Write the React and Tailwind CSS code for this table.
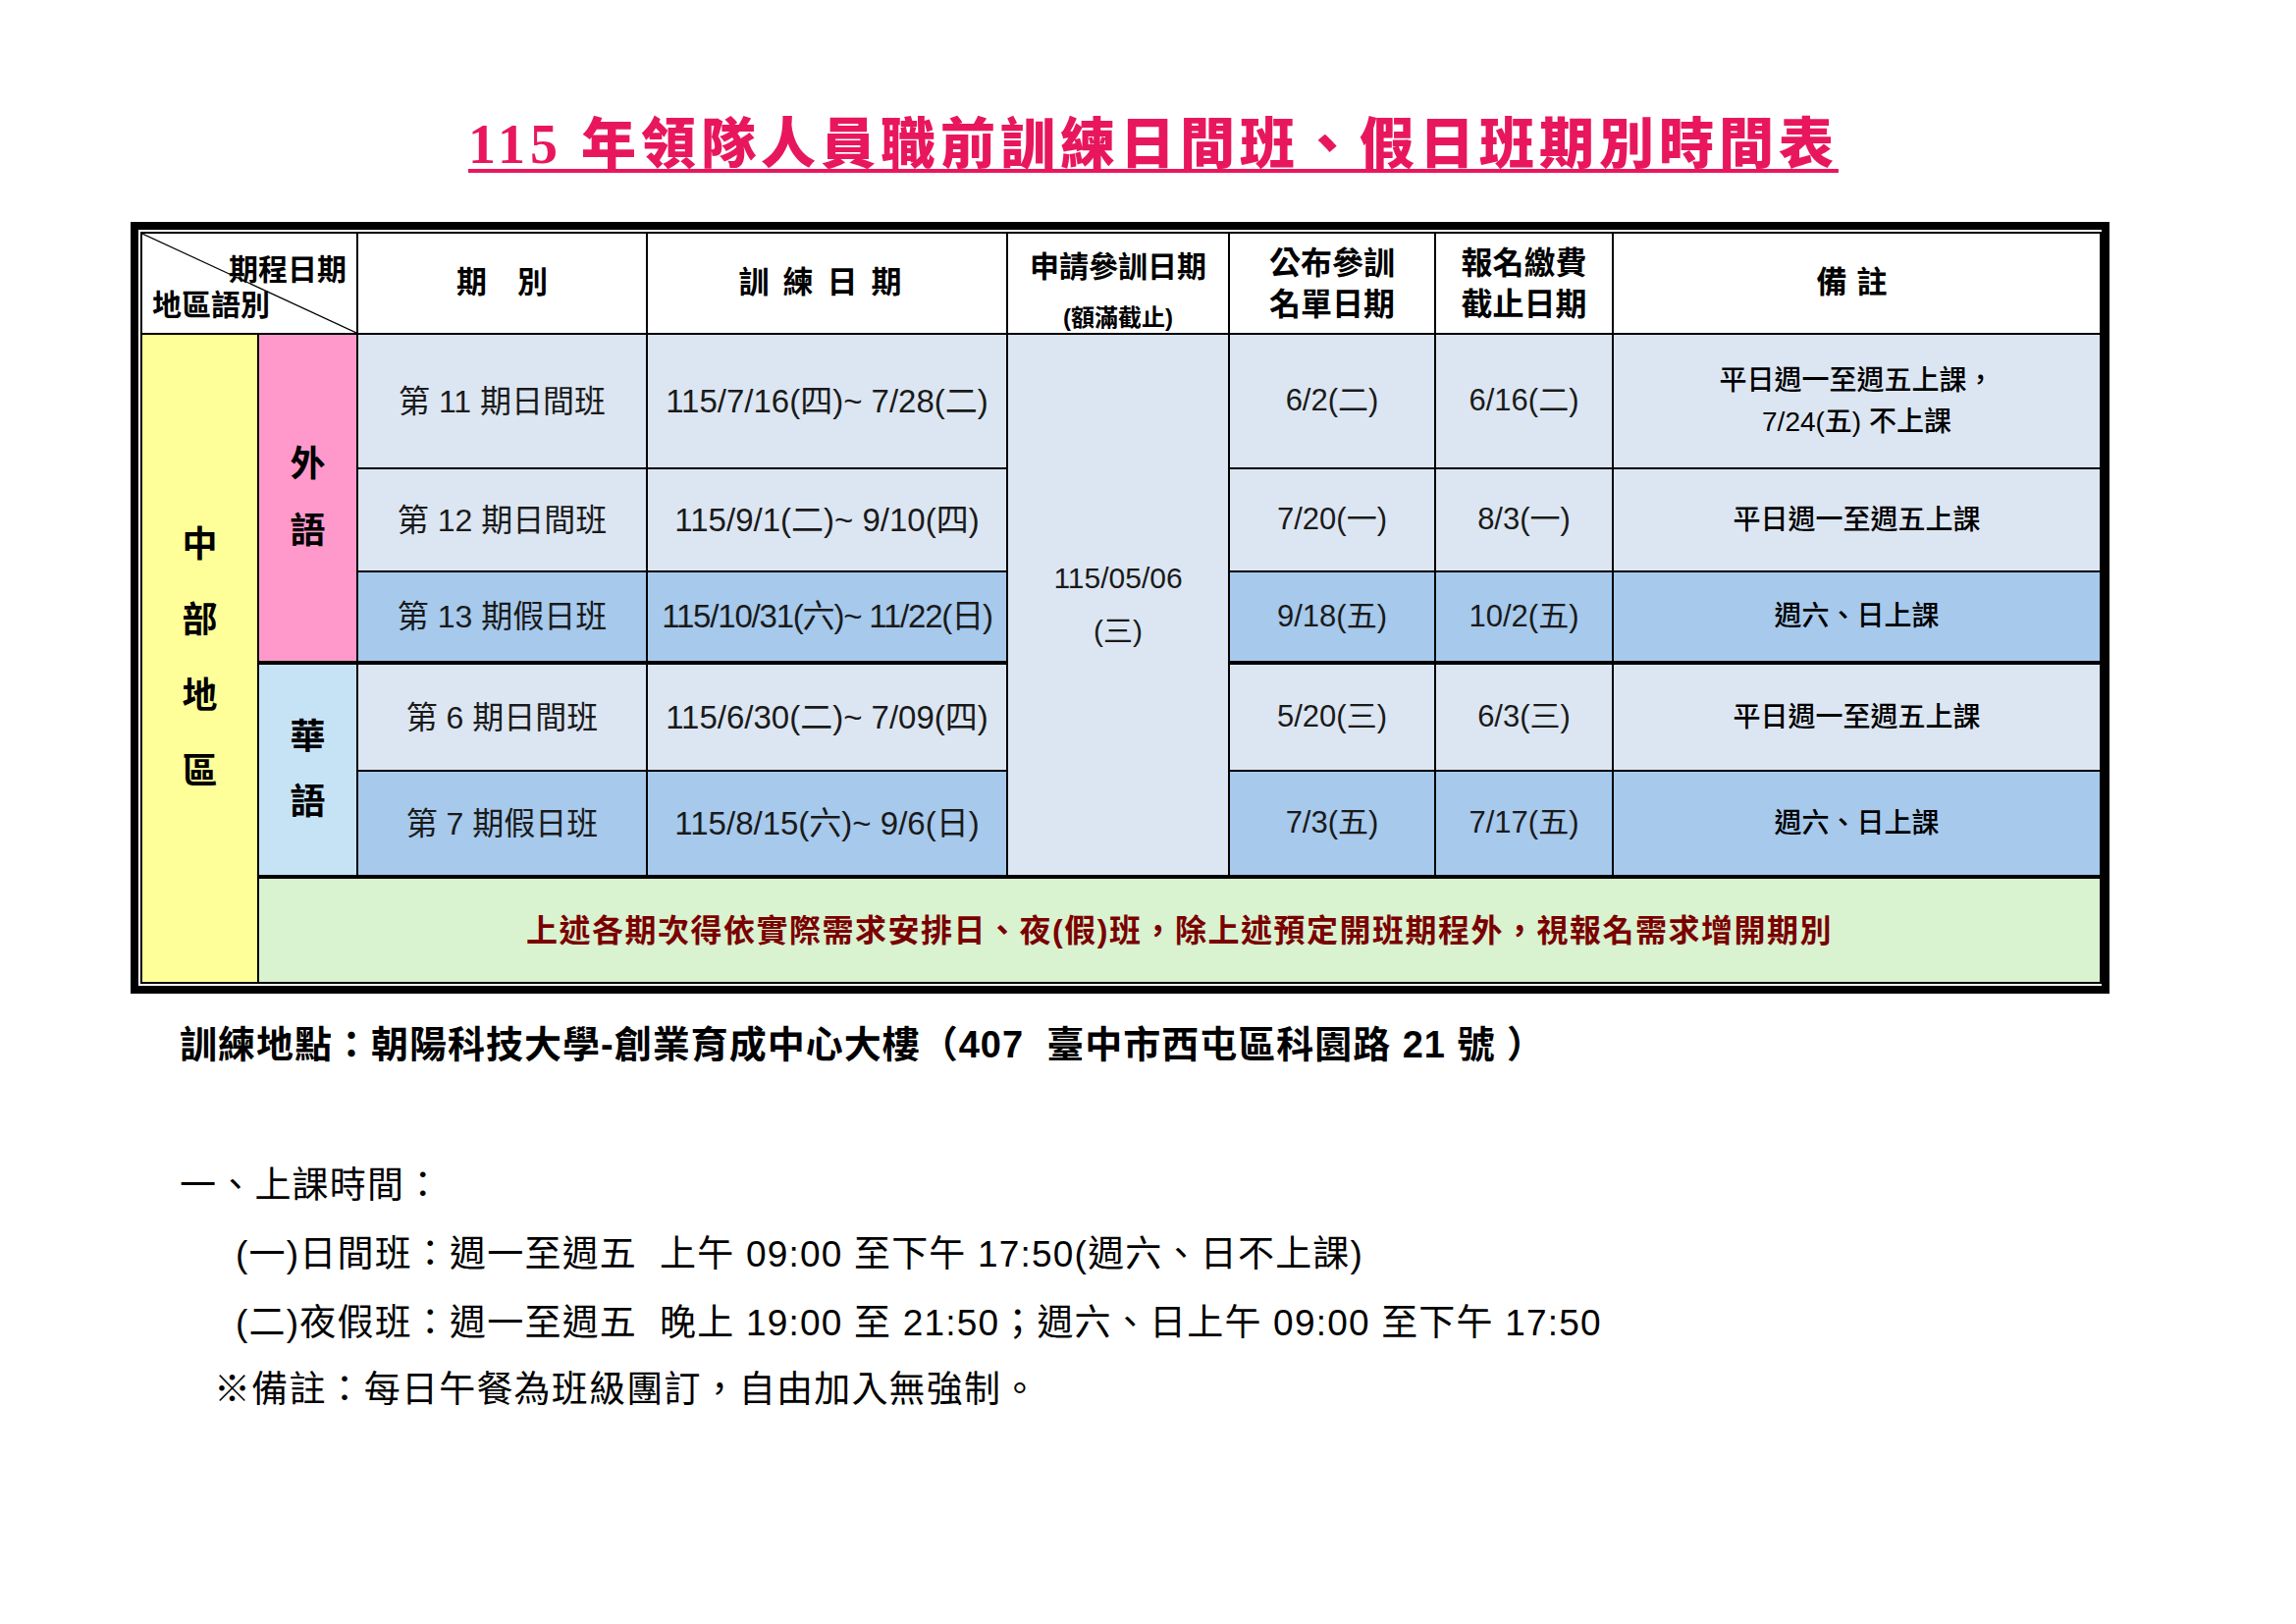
import React from 'react'

const sans = "font-['Liberation_Sans','Noto_Sans_CJK_TC',sans-serif]"

// 表格資料
const rows = [
  {
    name: '第 11 期日間班',
    date: '115/7/16(四)~ 7/28(二)',
    notice: '6/2(二)',
    pay: '6/16(二)',
    note: ['平日週一至週五上課，', '7/24(五) 不上課'],
    dark: false,
    h: 'h-[137px]',
  },
  {
    name: '第 12 期日間班',
    date: '115/9/1(二)~ 9/10(四)',
    notice: '7/20(一)',
    pay: '8/3(一)',
    note: ['平日週一至週五上課'],
    dark: false,
    h: 'h-[105px]',
  },
  {
    name: '第 13 期假日班',
    date: '115/10/31(六)~ 11/22(日)',
    tight: true,
    notice: '9/18(五)',
    pay: '10/2(五)',
    note: ['週六、日上課'],
    dark: true,
    thick: true,
    h: 'h-[93px]',
  },
  {
    name: '第 6 期日間班',
    date: '115/6/30(二)~ 7/09(四)',
    notice: '5/20(三)',
    pay: '6/3(三)',
    note: ['平日週一至週五上課'],
    dark: false,
    h: 'h-[110px]',
  },
  {
    name: '第 7 期假日班',
    date: '115/8/15(六)~ 9/6(日)',
    notice: '7/3(五)',
    pay: '7/17(五)',
    note: ['週六、日上課'],
    dark: true,
    thick: true,
    h: 'h-[108px]',
  },
]

function Vertical({ text, gap }) {
  return (
    <div className={`flex flex-col items-center font-bold text-[36px] ${gap}`}>
      {text.split('').map((c, i) => (
        <span key={i} className="leading-none">
          {c}
        </span>
      ))}
    </div>
  )
}

export default function App() {
  return (
    <div className={`w-full min-h-screen bg-white text-black ${sans}`}>
      {/* ----- title ----- */}
      <div className="pt-[112px] pl-[477px]">
        <h1 className="font-['Liberation_Serif','Noto_Sans_CJK_TC',serif] font-black text-[56px] leading-[70px] tracking-[5px] text-[#e8175d] underline decoration-[4px] underline-offset-[6px] whitespace-nowrap">
          115 年領隊人員職前訓練日間班、假日班期別時間表
        </h1>
      </div>

      {/* ----- table ----- */}
      <div className="mt-[44px] ml-[133px] w-[2016px] border-[8px] border-black bg-white p-[2px]">
        <table className="w-[1996px] table-fixed border-collapse border-2 border-black">
          <colgroup>
            <col className="w-[119px]" />
            <col className="w-[101px]" />
            <col className="w-[295px]" />
            <col className="w-[367px]" />
            <col className="w-[226px]" />
            <col className="w-[210px]" />
            <col className="w-[181px]" />
            <col className="w-[497px]" />
          </colgroup>
          <thead>
            <tr className="h-[102px] font-bold">
              <td colSpan={2} className="relative border-2 border-black bg-white p-0">
                <svg className="absolute inset-0 h-full w-full" preserveAspectRatio="none" viewBox="0 0 100 100">
                  <line x1="0" y1="0" x2="100" y2="100" stroke="black" strokeWidth="1.2" vectorEffect="non-scaling-stroke" />
                </svg>
                <div className="relative flex h-[98px] flex-col justify-between px-[10px] pt-[20px] pb-[12px] text-[30px] leading-none">
                  <span className="self-end">期程日期</span>
                  <span className="self-start">地區語別</span>
                </div>
              </td>
              <td className="border-2 border-black text-center text-[31px]">期　別</td>
              <td className="border-2 border-black text-center text-[31px] tracking-[14px]">訓練日期</td>
              <td className="border-2 border-black pt-[15px] text-center align-top">
                <div className="text-[30px] leading-[38px]">申請參訓日期</div>
                <div className="mt-[18px] text-[24px] leading-[30px]">(額滿截止)</div>
              </td>
              <td className="border-2 border-black text-center text-[32px] leading-[42px]">
                <div>公布參訓</div>
                <div>名單日期</div>
              </td>
              <td className="border-2 border-black text-center text-[32px] leading-[42px]">
                <div>報名繳費</div>
                <div>截止日期</div>
              </td>
              <td className="border-2 border-black text-center text-[31px] tracking-[10px]">備註</td>
            </tr>
          </thead>
          <tbody>
            {rows.map((r, i) => {
              const bg = r.dark ? 'bg-[#a6c9ec]' : 'bg-[#dce6f2]'
              const bb = r.thick ? 'border-b-4' : 'border-b-2'
              return (
                <tr key={i} className={r.h}>
                  {i === 0 && (
                    <td rowSpan={6} className="border-2 border-black bg-[#ffff99] align-middle">
                      <div className="flex justify-center">
                        <Vertical text="中部地區" gap="gap-[41px]" />
                      </div>
                    </td>
                  )}
                  {i === 0 && (
                    <td rowSpan={3} className="border-2 border-b-4 border-black bg-[#ff99cc] align-middle">
                      <div className="flex justify-center">
                        <Vertical text="外語" gap="gap-[32px]" />
                      </div>
                    </td>
                  )}
                  {i === 3 && (
                    <td rowSpan={2} className="border-2 border-b-4 border-black bg-[#c6e3f6] align-middle">
                      <div className="flex justify-center">
                        <Vertical text="華語" gap="gap-[30px]" />
                      </div>
                    </td>
                  )}
                  <td className={`border-2 ${bb} border-black ${bg} text-center text-[32px] text-[#1a1a1a]`}>{r.name}</td>
                  <td className={`border-2 ${bb} border-black ${bg} text-center text-[33px] text-[#1a1a1a] whitespace-nowrap ${r.tight ? 'tracking-[-1.2px]' : ''}`}>
                    {r.date}
                  </td>
                  {i === 0 && (
                    <td rowSpan={5} className="border-2 border-b-4 border-black bg-[#dce6f2] text-center text-[30px] text-[#1a1a1a]">
                      <div className="leading-[54px]">115/05/06</div>
                      <div className="leading-[54px]">(三)</div>
                    </td>
                  )}
                  <td className={`border-2 ${bb} border-black ${bg} text-center text-[31px] text-[#1a1a1a]`}>{r.notice}</td>
                  <td className={`border-2 ${bb} border-black ${bg} text-center text-[31px] text-[#1a1a1a]`}>{r.pay}</td>
                  <td className={`border-2 ${bb} border-black ${bg} text-center text-[28px] font-medium leading-[42px]`}>
                    {r.note.map((n, k) => (
                      <div key={k}>{n}</div>
                    ))}
                  </td>
                </tr>
              )
            })}
            <tr className="h-[108px]">
              <td colSpan={7} className="border-2 border-t-4 border-black bg-[#d9f2d0] text-center text-[32px] font-bold tracking-[1.5px] text-[#7a0000]">
                上述各期次得依實際需求安排日、夜(假)班，除上述預定開班期程外，視報名需求增開期別
              </td>
            </tr>
          </tbody>
        </table>
      </div>

      {/* ----- info ----- */}
      <div className="ml-[183px] mt-[29px] text-[38px] font-bold leading-[46px] tracking-[1px] whitespace-nowrap">
        訓練地點：朝陽科技大學-創業育成中心大樓（407&nbsp; 臺中市西屯區科園路 21 號 ）
      </div>
      <div className="ml-[183px] mt-[98px] text-[37px] leading-[46px] tracking-[1.2px] whitespace-nowrap">
        <div>一、上課時間：</div>
        <div className="mt-[24px] pl-[57px]">(一)日間班：週一至週五&nbsp; 上午 09:00 至下午 17:50(週六、日不上課)</div>
        <div className="mt-[24px] pl-[57px]">(二)夜假班：週一至週五&nbsp; 晚上 19:00 至 21:50；週六、日上午 09:00 至下午 17:50</div>
        <div className="mt-[22px] pl-[35px]">※備註：每日午餐為班級團訂，自由加入無強制。</div>
      </div>
    </div>
  )
}
